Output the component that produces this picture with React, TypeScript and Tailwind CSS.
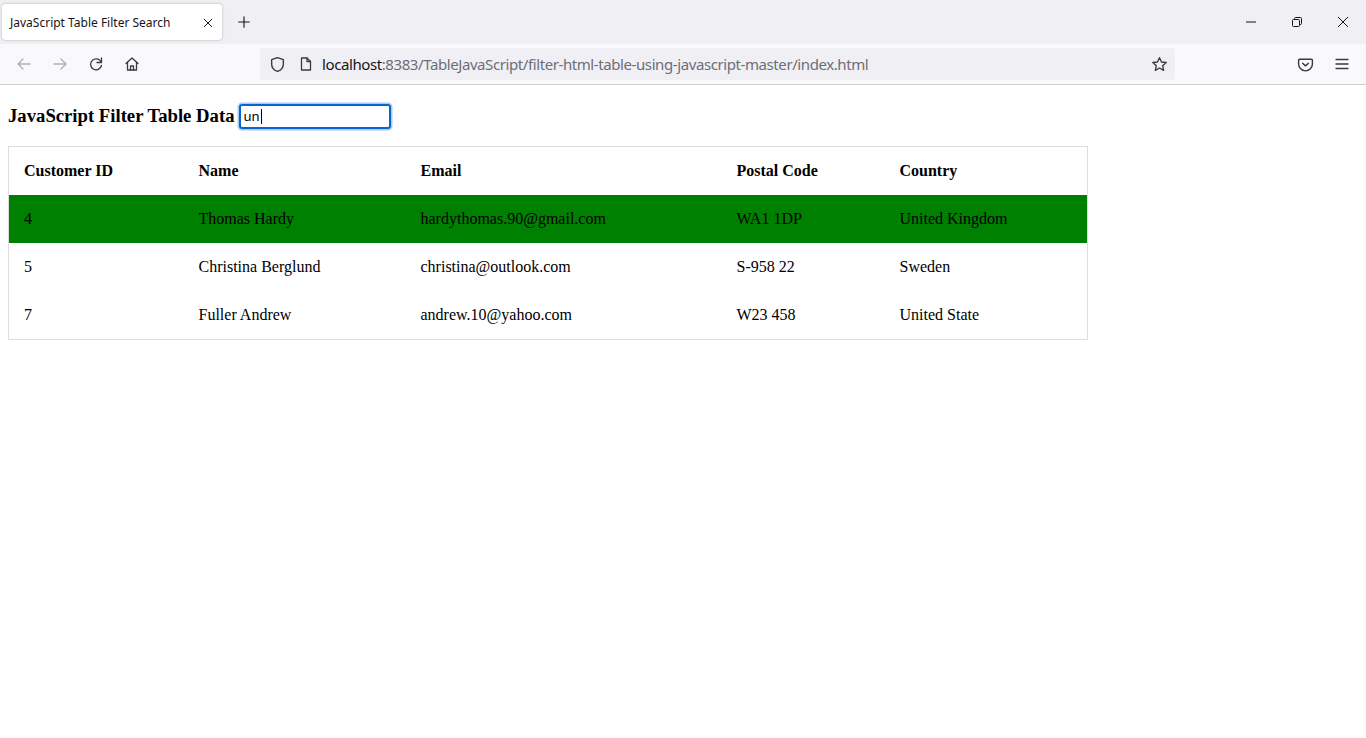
import React from 'react';

const rows = [
  { id: '4', name: 'Thomas Hardy', email: 'hardythomas.90@gmail.com', postal: 'WA1 1DP', country: 'United Kingdom', hit: true },
  { id: '5', name: 'Christina Berglund', email: 'christina@outlook.com', postal: 'S-958 22', country: 'Sweden', hit: false },
  { id: '7', name: 'Fuller Andrew', email: 'andrew.10@yahoo.com', postal: 'W23 458', country: 'United State', hit: false },
];

const ui = { fontFamily: '"Noto Sans", "Open Sans", sans-serif' };
const serif = { fontFamily: '"Liberation Serif", "Times New Roman", serif' };

function Icon({ children, className = '' }: { children: React.ReactNode; className?: string }) {
  return (
    <svg viewBox="0 0 16 16" fill="none" strokeWidth="1.3" strokeLinecap="round" strokeLinejoin="round" className={className}>
      {children}
    </svg>
  );
}

function BrowserChrome() {
  return (
    <div style={ui}>
      {/* tab strip */}
      <div className="flex h-[44px] items-center bg-[#f0f0f4]">
        <div className="ml-[2px] flex h-[36px] w-[220px] items-center justify-between rounded-[4px] bg-white pl-[8px] pr-[8px] pt-[1px] shadow-[0_0_3px_rgba(0,0,0,0.25)]">
          <span className="text-[12px] text-[#15141a]">JavaScript Table Filter Search</span>
          <Icon className="h-[12px] w-[12px] stroke-[#15141a]">
            <path d="M3 3l10 10M13 3L3 13" />
          </Icon>
        </div>
        <Icon className="ml-[15px] h-[14px] w-[14px] stroke-[#15141a]">
          <path d="M8 2v12M2 8h12" />
        </Icon>
        <div className="ml-auto flex items-center">
          <div className="flex h-[44px] w-[46px] items-center justify-center">
            <svg viewBox="0 0 12 12" className="h-[12px] w-[12px]"><path d="M1 6h10" stroke="#15141a" strokeWidth="1" /></svg>
          </div>
          <div className="flex h-[44px] w-[46px] items-center justify-center">
            <svg viewBox="0 0 12 12" className="h-[12px] w-[12px]" fill="none" stroke="#15141a" strokeWidth="1">
              <rect x="1.5" y="3.5" width="7" height="7" rx="1" />
              <path d="M3.5 3.5V2.5a1 1 0 0 1 1-1h5a1 1 0 0 1 1 1v5a1 1 0 0 1-1 1h-1" />
            </svg>
          </div>
          <div className="flex h-[44px] w-[46px] items-center justify-center">
            <svg viewBox="0 0 12 12" className="h-[12px] w-[12px]"><path d="M1 1l10 10M11 1L1 11" stroke="#15141a" strokeWidth="1" /></svg>
          </div>
        </div>
      </div>

      {/* nav bar */}
      <div className="flex h-[41px] items-center border-b border-[#cfcfd8] bg-[#f9f9fb]">
        <div className="flex items-center">
          <div className="flex w-[36px] justify-center pl-[12px]">
            <Icon className="h-[16px] w-[16px] stroke-[#b1b1b3]">
              <path d="M14 8H2M7 3L2 8l5 5" />
            </Icon>
          </div>
          <div className="flex w-[36px] justify-center pl-[12px]">
            <Icon className="h-[16px] w-[16px] stroke-[#b1b1b3]">
              <path d="M2 8h12M9 3l5 5-5 5" />
            </Icon>
          </div>
          <div className="flex w-[36px] justify-center pl-[12px]">
            <Icon className="h-[16px] w-[16px] stroke-[#3a3944]">
              <path d="M13.2 6.2A5.5 5.5 0 1 0 13.5 9.5" />
              <path d="M13.5 2v4.5H9" />
            </Icon>
          </div>
          <div className="flex w-[36px] justify-center pl-[11px]">
            <Icon className="h-[16px] w-[16px] stroke-[#3a3944]">
              <path d="M2 7.5L8 2l6 5.5" />
              <path d="M3.5 6.5V14h9V6.5" />
              <path d="M6.5 14v-4h3v4" />
            </Icon>
          </div>
        </div>
        <div className="ml-[116px] flex h-[32px] w-[915px] items-center rounded-[4px] bg-[#f0f0f4] pl-[9px] pr-[7px]">
          <Icon className="h-[17px] w-[17px] stroke-[#3a3944]">
            <path d="M8 1.5l5.5 2v4.2c0 3.2-2.4 5.6-5.5 6.8-3.1-1.2-5.5-3.6-5.5-6.8V3.5z" />
          </Icon>
          <Icon className="ml-[12px] h-[16px] w-[16px] stroke-[#3a3944]">
            <path d="M3.5 2h5.5l3.5 3.5V14h-9z" />
            <path d="M9 2v3.5h3.5" />
          </Icon>
          <div className="ml-[8px] text-[15px] tracking-[-0.41px]">
            <span className="text-[#15141a]">localhost</span>
            <span className="text-[#6d6d78]">:8383/TableJavaScript/filter-html-table-using-javascript-master/index.html</span>
          </div>
          <Icon className="ml-auto h-[17px] w-[17px] stroke-[#3a3944]">
            <path d="M8 1.6l1.9 4 4.4.5-3.3 3 .9 4.4L8 11.3 4.1 13.5l.9-4.4-3.3-3 4.4-.5z" />
          </Icon>
        </div>
        <div className="ml-[122px] flex items-center">
          <Icon className="h-[17px] w-[17px] stroke-[#3a3944]">
            <path d="M2.5 3h11a1 1 0 0 1 1 1v3.5a6.5 6.5 0 0 1-13 0V4a1 1 0 0 1 1-1z" />
            <path d="M5.3 6.8L8 9.3l2.7-2.5" />
          </Icon>
          <Icon className="ml-[20px] h-[16px] w-[16px] stroke-[#3a3944]">
            <path d="M2 3.5h12M2 8h12M2 12.5h12" />
          </Icon>
        </div>
      </div>
    </div>
  );
}

export default function App() {
  return (
    <div className="h-[738px] w-[1366px] overflow-hidden bg-white">
      <BrowserChrome />

      <div className="px-[8px] pt-[18px] text-black" style={serif}>
        <div className="flex items-center">
          <h3 className="text-[18.7px] font-bold leading-[26px]">JavaScript Filter Table Data</h3>
          <div className="ml-[4px] flex h-[25px] w-[152px] items-center rounded-[3px] border-2 border-[#0b62d6] pl-[3px] shadow-[0_0_0_1.5px_#a7cdf3]" style={ui}>
            <span className="text-[13px] leading-none text-black">un</span>
            <span className="ml-[1px] h-[15px] w-px bg-black" />
          </div>
        </div>

        <table className="mt-[17px] w-[1080px] table-fixed border-collapse border border-[#dddddd] text-[16px]">
          <thead>
            <tr>
              <th className="w-[175px] p-[15px] text-left font-bold leading-[18px]">Customer ID</th>
              <th className="w-[222px] p-[15px] text-left font-bold leading-[18px]">Name</th>
              <th className="w-[316px] p-[15px] text-left font-bold leading-[18px]">Email</th>
              <th className="w-[163px] p-[15px] text-left font-bold leading-[18px]">Postal Code</th>
              <th className="p-[15px] text-left font-bold leading-[18px]">Country</th>
            </tr>
          </thead>
          <tbody>
            {rows.map((r) => (
              <tr key={r.id} className={r.hit ? 'bg-[#008000]' : ''}>
                <td className="p-[15px] leading-[18px]">{r.id}</td>
                <td className="p-[15px] leading-[18px]">{r.name}</td>
                <td className="p-[15px] leading-[18px]">{r.email}</td>
                <td className="p-[15px] leading-[18px]">{r.postal}</td>
                <td className="p-[15px] leading-[18px]">{r.country}</td>
              </tr>
            ))}
          </tbody>
        </table>
      </div>
    </div>
  );
}
